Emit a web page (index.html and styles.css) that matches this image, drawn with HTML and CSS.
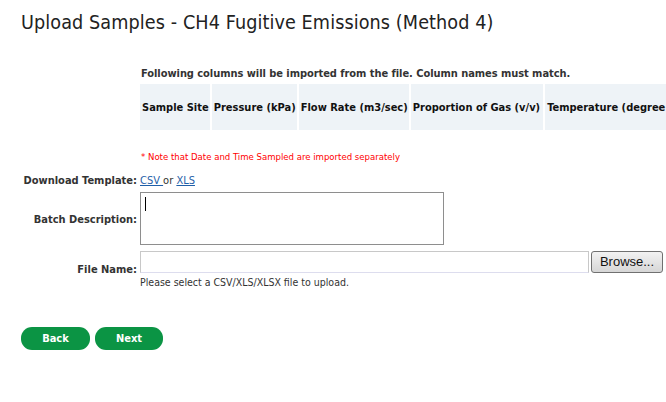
FILE: index.html
```html
<!DOCTYPE html>
<html>
<head>
<meta charset="utf-8">
<link rel="stylesheet" href="styles.css">
</head>
<body>
<div class="page">
  <h1 class="title">Upload Samples - CH4 Fugitive Emissions (Method 4)</h1>
  <div class="form">
    <div class="label"></div>
    <div class="content">
      <div class="intro">Following columns will be imported from the file. Column names must match.</div>
      <div class="cols">
        <div class="col">Sample Site</div>
        <div class="col">Pressure (kPa)</div>
        <div class="col">Flow Rate (m3/sec)</div>
        <div class="col">Proportion of Gas (v/v)</div>
        <div class="col last">Temperature (degree</div>
      </div>
      <div class="note">* Note that Date and Time Sampled are imported separately</div>
    </div>

    <div class="label dl">Download Template:</div>
    <div class="content dlc"><a href="#">CSV </a> or <a href="#">XLS</a></div>

    <div class="label batch">Batch Description:</div>
    <div class="content"><div class="textarea"><span class="caret"></span></div></div>

    <div class="label file">File Name:</div>
    <div class="content">
      <div class="filerow"><div class="fileinput"></div><div class="browse">Browse...</div></div>
      <div class="hint">Please select a CSV/XLS/XLSX file to upload.</div>
    </div>
  </div>
  <div class="buttons">
    <div class="btn">Back</div>
    <div class="btn">Next</div>
  </div>
</div>
</body>
</html>
```
FILE: styles.css
```css
html, body { margin: 0; padding: 0; background: #fff; }
body { font-family: "DejaVu Sans Condensed", "DejaVu Sans", sans-serif; color: #333; overflow: hidden; }
.page { padding: 0 0 0 21px; width: 645px; overflow: hidden; }
.title { font-weight: normal; font-size: 19.6px; color: #222; margin: 0; padding-top: 11px; height: 56px; line-height: 24px; letter-spacing: 0.1px; white-space: nowrap; }
.form { display: grid; grid-template-columns: 116px 1fr; column-gap: 3px; }
.label { font-size: 11px; font-weight: bold; text-align: right; color: #333; }
.content { font-size: 11px; min-width: 0; }
.intro { font-weight: bold; font-size: 11px; padding-left: 1px; line-height: 14px; letter-spacing: -0.05px; }
.cols { display: flex; gap: 2px; margin-top: 3px; height: 46px; overflow: hidden; }
.col { background: #eef3f7; font-weight: bold; font-size: 11px; color: #111; display: flex; align-items: center; padding: 0 1px 0 2px; white-space: nowrap; flex: none; }
.col:nth-child(4) { padding-right: 3px; }
.col.last { flex: 1; }
.note { color: #f00; font-size: 9.5px; margin-top: 21px; padding-left: 1px; line-height: 12px; height: 23px; }
.dl { line-height: 14px; }
.dlc { line-height: 14px; }
.dlc a { color: #1f5fa8; text-decoration: underline; }
.batch { padding-top: 25px; }
.textarea { width: 302px; height: 51px; border: 1px solid #8e8e8e; margin-top: 4px; box-sizing: content-box; }
.caret { display: block; width: 1px; height: 14px; background: #000; margin: 4px 0 0 4px; }
.file { padding-top: 18px; }
.filerow { display: flex; margin-top: 6px; gap: 2px; }
.fileinput { width: 447px; height: 20px; border: 1px solid #c8c8c8; border-bottom-color: #dde; }
.browse { width: 70px; height: 20px; border: 1px solid #707070; border-radius: 3px; background: linear-gradient(#f2f2f2, #e4e4e4 50%, #d6d6d6); font-family: "Liberation Sans", Arial, sans-serif; font-size: 13px; color: #111; text-align: center; line-height: 20px; }
.hint { font-size: 10.5px; margin-top: 3px; line-height: 12px; }
.buttons { display: flex; gap: 5px; margin-top: 39px; }
.btn { background: #0b9444; color: #fff; font-weight: bold; font-size: 11px; border-radius: 11px; height: 23px; line-height: 23px; text-align: center; }
.btn:first-child { width: 69px; }
.btn:last-child { width: 68px; }
```
